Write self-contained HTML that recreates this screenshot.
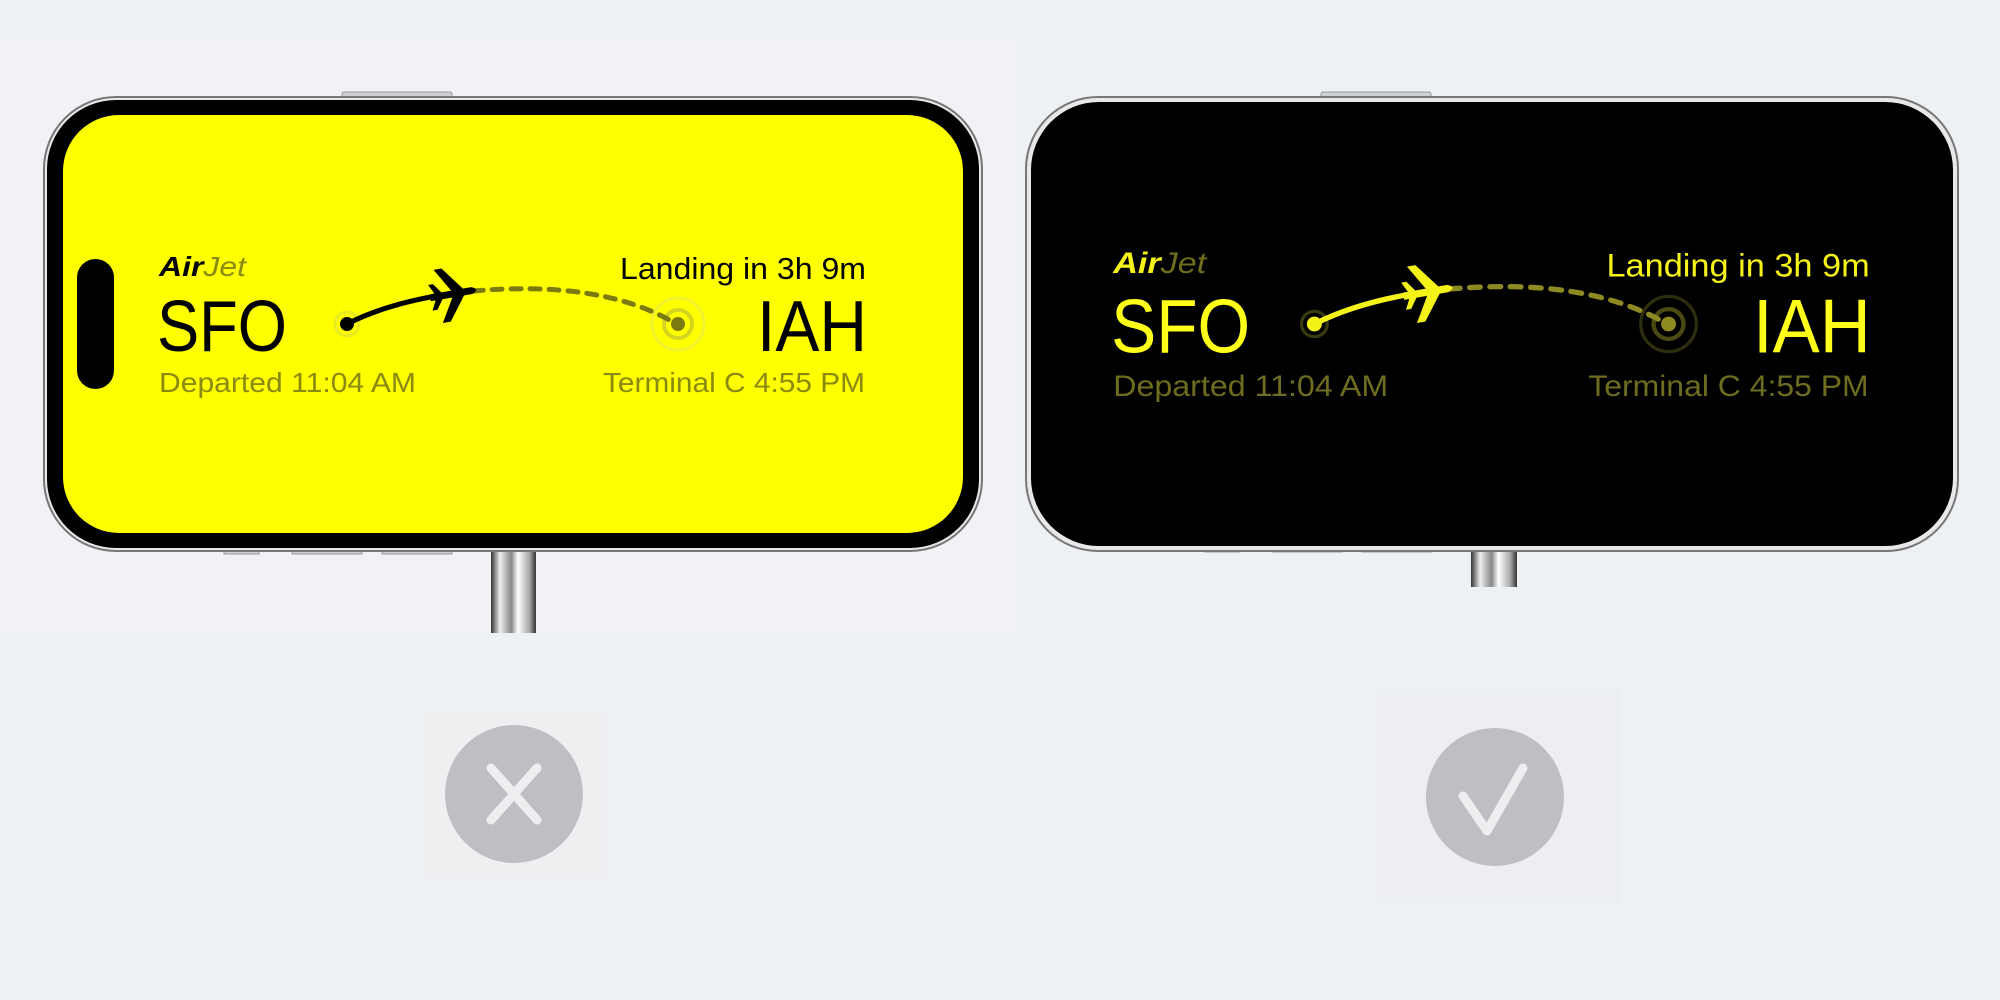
<!DOCTYPE html>
<html><head><meta charset="utf-8"><style>
html,body{margin:0;padding:0;width:2000px;height:1000px;overflow:hidden;background:#eef1f4;}
.abs{position:absolute;}
</style></head><body>
<div class="abs" style="left:0;top:40px;width:1022px;height:593px;background:#f0f2f5"></div>
<div class="abs" style="left:421px;top:709px;width:186px;height:169px;background:#efeff2"></div>
<div class="abs" style="left:1375px;top:689px;width:245px;height:214px;background:#edeef1"></div>
<svg class="abs" style="left:0;top:0" width="2000" height="1000" viewBox="0 0 2000 1000" font-family="Liberation Sans, sans-serif">
<defs>
<linearGradient id="cab" x1="0" x2="1">
<stop offset="0" stop-color="#333"/><stop offset="0.2" stop-color="#eee"/><stop offset="0.45" stop-color="#888"/><stop offset="0.6" stop-color="#fff"/><stop offset="0.85" stop-color="#aaa"/><stop offset="1" stop-color="#333"/>
</linearGradient>
</defs>
<rect x="491" y="545" width="45" height="88" fill="url(#cab)"/>
<rect x="1471" y="545" width="46" height="42" fill="url(#cab)"/>
<rect x="342" y="92" width="110" height="6" rx="2" fill="#cfd0d3" stroke="#999" stroke-width="1"/>
<rect x="1321" y="92" width="110" height="6" rx="2" fill="#cfd0d3" stroke="#999" stroke-width="1"/>
<rect x="224" y="548" width="35" height="6" fill="#d0d0d3" stroke="#999"/>
<rect x="292" y="548" width="70" height="6" fill="#d0d0d3" stroke="#999"/>
<rect x="382" y="548" width="70" height="6" fill="#d0d0d3" stroke="#999"/>
<rect x="1205" y="546" width="35" height="6" fill="#d0d0d3" stroke="#999"/>
<rect x="1272" y="546" width="70" height="6" fill="#d0d0d3" stroke="#999"/>
<rect x="1362" y="546" width="70" height="6" fill="#d0d0d3" stroke="#999"/>
<rect x="44" y="97" width="938" height="454" rx="72" fill="#e8e8ea" stroke="#777" stroke-width="2"/>
<rect x="47" y="100" width="932" height="448" rx="69" fill="#000"/>
<rect x="63" y="115" width="900" height="418" rx="56" fill="#ffff00"/>
<rect x="77" y="259" width="37" height="130" rx="18.5" fill="#000"/>
<rect x="1026" y="97" width="932" height="454" rx="72" fill="#e8e8ea" stroke="#777" stroke-width="2"/>
<rect x="1031" y="102" width="922" height="444" rx="68" fill="#000"/>

<g>
<text x="159" y="276" font-size="28" font-style="italic" font-weight="bold" textLength="87" lengthAdjust="spacingAndGlyphs"><tspan fill="#000">Air</tspan><tspan fill="#8a8a10" font-weight="normal">Jet</tspan></text>
<text x="157" y="351" font-size="72" fill="#000" textLength="130" lengthAdjust="spacingAndGlyphs">SFO</text>
<text x="159" y="392" font-size="28" fill="#8a8a10" textLength="257" lengthAdjust="spacingAndGlyphs">Departed 11:04 AM</text>
<text x="866" y="279" font-size="31" fill="#000" text-anchor="end" textLength="246" lengthAdjust="spacingAndGlyphs">Landing in 3h 9m</text>
<text x="867" y="351" font-size="72" fill="#000" text-anchor="end" textLength="110" lengthAdjust="spacingAndGlyphs">IAH</text>
<text x="865" y="392" font-size="28" fill="#8a8a10" text-anchor="end" textLength="262" lengthAdjust="spacingAndGlyphs">Terminal C 4:55 PM</text>
<circle cx="347" cy="324" r="12" fill="none" stroke="#eaea20" stroke-width="3"/>
<circle cx="678" cy="324" r="26" fill="none" stroke="#f2f230" stroke-width="3"/>
<circle cx="678" cy="324" r="14" fill="none" stroke="#d5d520" stroke-width="4"/>
<path d="M473 291 Q600 280 673 322" fill="none" stroke="#7a7a10" stroke-width="5" stroke-dasharray="10 9" stroke-linecap="round"/>
<path d="M347 324 Q390 302 455 293" fill="none" stroke="#000" stroke-width="5" stroke-linecap="round"/>
<circle cx="347" cy="324" r="7" fill="#000"/>
<circle cx="678" cy="324" r="7" fill="#7a7a10"/>
<g transform="translate(452 294) rotate(-10)" fill="#000">
<path d="M-22 -3.5 L20 -3.5 Q29 0 20 3.5 L-22 3.5 Z"/>
<path d="M0 -3 L-14 -27 L-6 -27 L12 -3 Z"/>
<path d="M0 3 L-14 27 L-6 27 L12 3 Z"/>
<path d="M-17 -3 L-22 -13 L-17 -13 L-10 -3 Z"/>
<path d="M-17 3 L-22 13 L-17 13 L-10 3 Z"/>
</g>
</g>

<g transform="translate(1110 324) scale(1.07 1.06) translate(-156 -324)">
<text x="159" y="276" font-size="28" font-style="italic" font-weight="bold" textLength="87" lengthAdjust="spacingAndGlyphs"><tspan fill="#f5f21a">Air</tspan><tspan fill="#6e6c1e" font-weight="normal">Jet</tspan></text>
<text x="157" y="351" font-size="72" fill="#ffff1a" textLength="130" lengthAdjust="spacingAndGlyphs">SFO</text>
<text x="159" y="392" font-size="28" fill="#6e6c1e" textLength="257" lengthAdjust="spacingAndGlyphs">Departed 11:04 AM</text>
<text x="866" y="279" font-size="31" fill="#f5f21a" text-anchor="end" textLength="246" lengthAdjust="spacingAndGlyphs">Landing in 3h 9m</text>
<text x="867" y="351" font-size="72" fill="#ffff1a" text-anchor="end" textLength="110" lengthAdjust="spacingAndGlyphs">IAH</text>
<text x="865" y="392" font-size="28" fill="#6e6c1e" text-anchor="end" textLength="262" lengthAdjust="spacingAndGlyphs">Terminal C 4:55 PM</text>
<circle cx="347" cy="324" r="12" fill="none" stroke="#3a3a10" stroke-width="3"/>
<circle cx="678" cy="324" r="26" fill="none" stroke="#2e2e0e" stroke-width="3"/>
<circle cx="678" cy="324" r="14" fill="none" stroke="#4a4a14" stroke-width="4"/>
<path d="M473 291 Q600 280 673 322" fill="none" stroke="#8c8a20" stroke-width="5" stroke-dasharray="10 9" stroke-linecap="round"/>
<path d="M347 324 Q390 302 455 293" fill="none" stroke="#f5f21a" stroke-width="5" stroke-linecap="round"/>
<circle cx="347" cy="324" r="7" fill="#f5f21a"/>
<circle cx="678" cy="324" r="7" fill="#8c8a20"/>
<g transform="translate(452 294) rotate(-10)" fill="#f5f21a">
<path d="M-22 -3.5 L20 -3.5 Q29 0 20 3.5 L-22 3.5 Z"/>
<path d="M0 -3 L-14 -27 L-6 -27 L12 -3 Z"/>
<path d="M0 3 L-14 27 L-6 27 L12 3 Z"/>
<path d="M-17 -3 L-22 -13 L-17 -13 L-10 -3 Z"/>
<path d="M-17 3 L-22 13 L-17 13 L-10 3 Z"/>
</g>
</g>

<circle cx="514" cy="794" r="69" fill="#bfbfc3"/>
<path d="M491 768 L537 820 M537 768 L491 820" stroke="#eeeef1" stroke-width="9" stroke-linecap="round"/>
<circle cx="1495" cy="797" r="69" fill="#bfbfc3"/>
<path d="M1463 796 L1487 831 L1523 768" fill="none" stroke="#eeeef1" stroke-width="9" stroke-linecap="round" stroke-linejoin="round"/>
</svg>
</body></html>
